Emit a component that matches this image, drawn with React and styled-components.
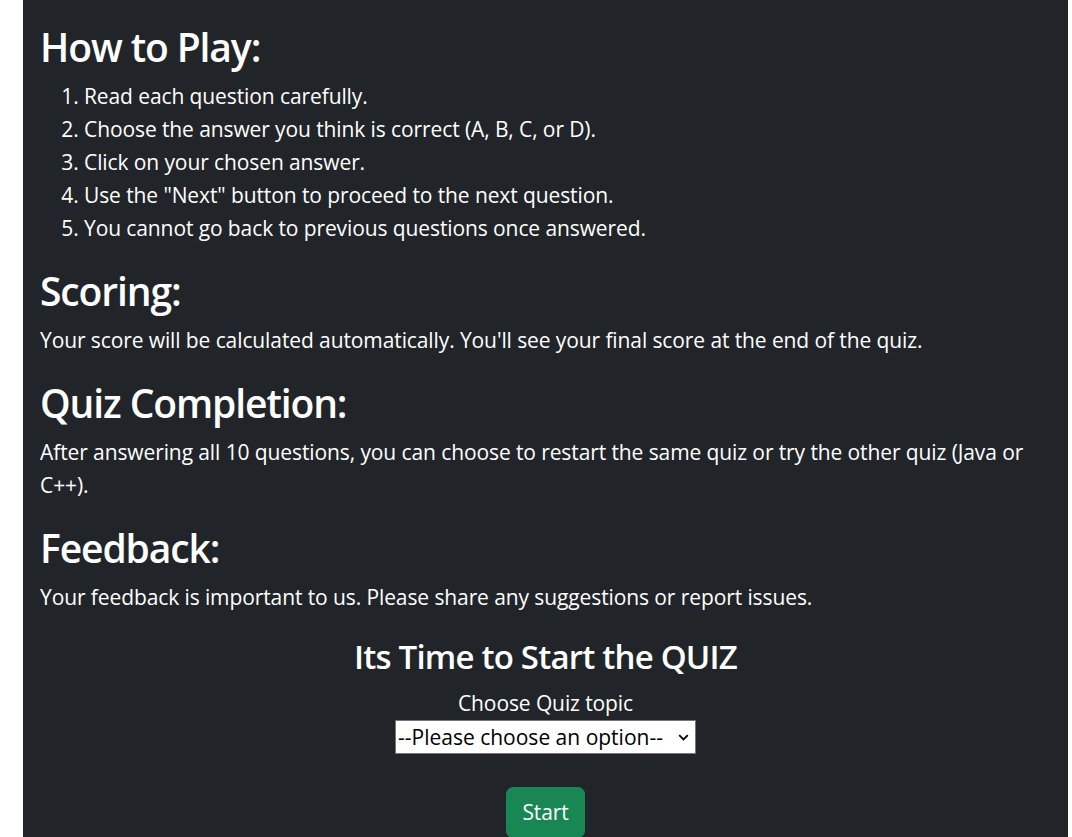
import styled, { createGlobalStyle } from 'styled-components';

const GlobalStyle = createGlobalStyle`
  html, body {
    margin: 0;
    padding: 0;
    background: #ffffff;
    overflow: hidden;
  }
  body {
    font-family: 'Open Sans', 'Noto Sans', sans-serif;
  }
`;

const Page = styled.main`
  margin-left: 23px;
  width: 1045px;
  min-height: 100vh;
  box-sizing: border-box;
  padding: 22px 17px 0 17px;
  background: #212529;
  color: #ffffff;
  font-size: 21px;
  letter-spacing: -0.1px;
  line-height: 33px;
`;

const Heading = styled.h2`
  margin: 0 0 8px;
  font-size: 39px;
  line-height: 50px;
  font-weight: 600;
  letter-spacing: -1.1px;
`;

const Steps = styled.ol`
  margin: 0 0 21px;
  padding-left: 44px;
`;

const Text = styled.p`
  margin: 0 0 21px;
`;

const StartBox = styled.section`
  display: flex;
  flex-direction: column;
  align-items: center;
`;

const SubHeading = styled.h3`
  margin: 0 0 8px;
  font-size: 33px;
  line-height: 44px;
  font-weight: 600;
  letter-spacing: -0.8px;
`;

const Label = styled.label`
  display: block;
`;

const SelectWrap = styled.div`
  position: relative;
  width: 301px;
  margin-bottom: 33px;
`;

const Select = styled.select`
  appearance: none;
  display: block;
  width: 100%;
  height: 34px;
  box-sizing: border-box;
  padding: 0 24px 0 2px;
  border: 1px solid #767676;
  border-radius: 0;
  background: #ffffff;
  color: #000000;
  font-family: inherit;
  font-size: 21px;
  line-height: 32px;
`;

const Chevron = styled.svg`
  position: absolute;
  right: 7px;
  top: 14px;
  pointer-events: none;
`;

const StartButton = styled.button`
  padding: 8px 15px;
  border: 1px solid #198754;
  border-radius: 7px;
  background: #198754;
  color: #ffffff;
  font-family: inherit;
  font-size: 21px;
  letter-spacing: -0.1px;
  line-height: 33px;
  cursor: pointer;
`;

const steps = [
  'Read each question carefully.',
  'Choose the answer you think is correct (A, B, C, or D).',
  'Click on your chosen answer.',
  'Use the "Next" button to proceed to the next question.',
  'You cannot go back to previous questions once answered.',
];

export default function App() {
  return (
    <>
      <GlobalStyle />
      <Page>
        <Heading>How to Play:</Heading>
        <Steps>
          {steps.map((s) => (
            <li key={s}>{s}</li>
          ))}
        </Steps>

        <Heading>Scoring:</Heading>
        <Text>
          Your score will be calculated automatically. You'll see your final score at the end of the quiz.
        </Text>

        <Heading>Quiz Completion:</Heading>
        <Text>
          After answering all 10 questions, you can choose to restart the same quiz or try the other quiz (Java or
          C++).
        </Text>

        <Heading>Feedback:</Heading>
        <Text>Your feedback is important to us. Please share any suggestions or report issues.</Text>

        <StartBox>
          <SubHeading>Its Time to Start the QUIZ</SubHeading>
          <Label htmlFor="topic">Choose Quiz topic</Label>
          <SelectWrap>
            <Select id="topic" defaultValue="">
              <option value="">--Please choose an option--</option>
              <option value="java">Java</option>
              <option value="cpp">C++</option>
            </Select>
            <Chevron width="11" height="7" viewBox="0 0 11 7">
              <path d="M1.2 1.2 L5.5 5.5 L9.8 1.2" fill="none" stroke="#000" strokeWidth="1.8" />
            </Chevron>
          </SelectWrap>
          <StartButton type="button">Start</StartButton>
        </StartBox>
      </Page>
    </>
  );
}
